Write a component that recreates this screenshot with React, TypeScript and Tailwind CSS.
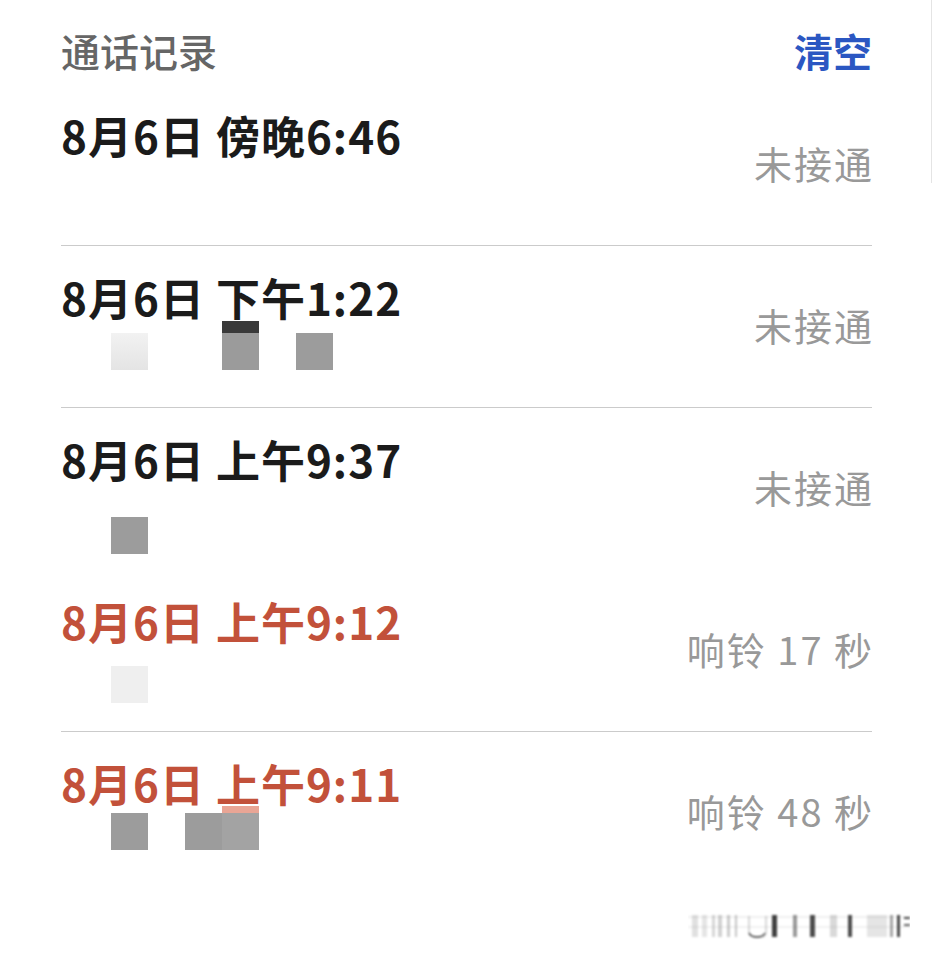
type Cell = string | null;

type Call = {
  time: string;
  status: string;
  missed: boolean;
  divider: boolean;
  mosaicGap: string;
  cells: Cell[];
};

// mosaic cells sit on a 37px grid starting at x=111
const calls: Call[] = [
  {
    time: "8月6日 傍晚6:46",
    status: "未接通",
    missed: false,
    divider: true,
    mosaicGap: "mt-[14px]",
    cells: [],
  },
  {
    time: "8月6日 下午1:22",
    status: "未接通",
    missed: false,
    divider: true,
    mosaicGap: "mt-[14px]",
    cells: ["light", null, null, "darkTop", null, "dark"],
  },
  {
    time: "8月6日 上午9:37",
    status: "未接通",
    missed: false,
    divider: false,
    mosaicGap: "mt-[36px]",
    cells: ["dark"],
  },
  {
    time: "8月6日 上午9:12",
    status: "响铃 17 秒",
    missed: true,
    divider: true,
    mosaicGap: "mt-[23px]",
    cells: ["pale"],
  },
  {
    time: "8月6日 上午9:11",
    status: "响铃 48 秒",
    missed: true,
    divider: false,
    mosaicGap: "mt-[8px]",
    cells: ["dark", null, "dark", "redTop"],
  },
];

const cellClass: Record<string, string> = {
  light: "bg-gradient-to-b from-[#f2f2f2] to-[#e4e4e4]",
  pale: "bg-[#efefef]",
  dark: "bg-[#9c9c9c]",
  darkTop: "bg-[#9b9b9b] shadow-[0_-12px_0_0_#3a3a3a]",
  redTop: "bg-[#a3a3a3] shadow-[0_-7px_0_0_#e9a595]",
};

function Mosaic({ cells, gap }: { cells: Cell[]; gap: string }) {
  return (
    <div className={`flex h-[37px] pl-[50px] ${gap}`}>
      {cells.map((c, i) => (
        <div key={i} className={`h-[37px] w-[37px] ${c ? cellClass[c] : ""}`} />
      ))}
    </div>
  );
}

function Watermark() {
  const bars = [
    [4, 6, 0.12],
    [14, 5, 0.1],
    [24, 3, 0.16],
    [30, 4, 0.18],
    [39, 3, 0.2],
    [47, 2, 0.22],
    [84, 5, 0.75],
    [105, 4, 0.4],
    [122, 5, 0.7],
    [142, 7, 0.15],
    [160, 4, 0.7],
    [179, 20, 0.1],
    [202, 3, 0.35],
    [209, 3, 0.7],
  ];
  return (
    <svg width="222" height="28" viewBox="0 0 222 28">
      <defs>
        <filter id="wm-blur">
          <feGaussianBlur stdDeviation="1.2" />
        </filter>
      </defs>
      <g filter="url(#wm-blur)">
        <rect x="0" y="4" width="222" height="2" fill="#000" opacity="0.06" />
        <rect x="0" y="14" width="222" height="2" fill="#000" opacity="0.05" />
        {bars.map(([x, w, o], i) => (
          <rect key={i} x={x} y="3" width={w} height="22" fill="#000" opacity={o} />
        ))}
        <path d="M61 4 V20 Q61 25 68 25 H72 Q78 25 78 20 V4" fill="none" stroke="#000" strokeOpacity="0.15" strokeWidth="2" />
        <path d="M61 21 Q63 25 69 25 Q75 25 77 21" fill="none" stroke="#000" strokeOpacity="0.7" strokeWidth="1.5" />
        <rect x="216" y="5" width="6" height="2" fill="#000" opacity="0.7" />
        <rect x="216" y="12" width="6" height="2" fill="#000" opacity="0.6" />
      </g>
    </svg>
  );
}

export default function App() {
  return (
    <div
      className="relative h-[958px] w-[932px] overflow-hidden bg-white"
      style={{ fontFamily: '"Noto Sans CJK SC", "Noto Sans", sans-serif' }}
    >
      <div className="absolute right-0 top-0 h-[183px] w-px bg-[#e4e4e4]" aria-hidden />

      <div className="pl-[61px] pr-[60px]">
        <header className="flex h-[84px] items-start justify-between pt-[31px]">
          <h1 className="text-[39px] font-medium leading-none text-[#666666]">通话记录</h1>
          <button className="text-[39px] font-semibold leading-none text-[#2b57c2]">清空</button>
        </header>

        <ul>
          {calls.map((c) => (
            <li
              key={c.time}
              className={`box-border flex h-[162px] items-start justify-between ${
                c.divider ? "border-b border-[#cbcbcb]" : ""
              }`}
            >
              <div className="flex flex-col pt-[29px]">
                <span
                  className={`text-[44px] font-bold leading-[44px] tracking-[1px] ${
                    c.missed ? "text-[#c2513a]" : "text-[#1b1b1b]"
                  }`}
                >
                  {c.time}
                </span>
                <Mosaic cells={c.cells} gap={c.mosaicGap} />
              </div>
              <span className="-mr-[2px] whitespace-pre pt-[60px] text-[38px] leading-none tracking-[2px] text-[#999999]">
                {c.status}
              </span>
            </li>
          ))}
        </ul>
      </div>

      <div className="flex justify-end pr-[22px] pt-[18px]">
        <Watermark />
      </div>
    </div>
  );
}
